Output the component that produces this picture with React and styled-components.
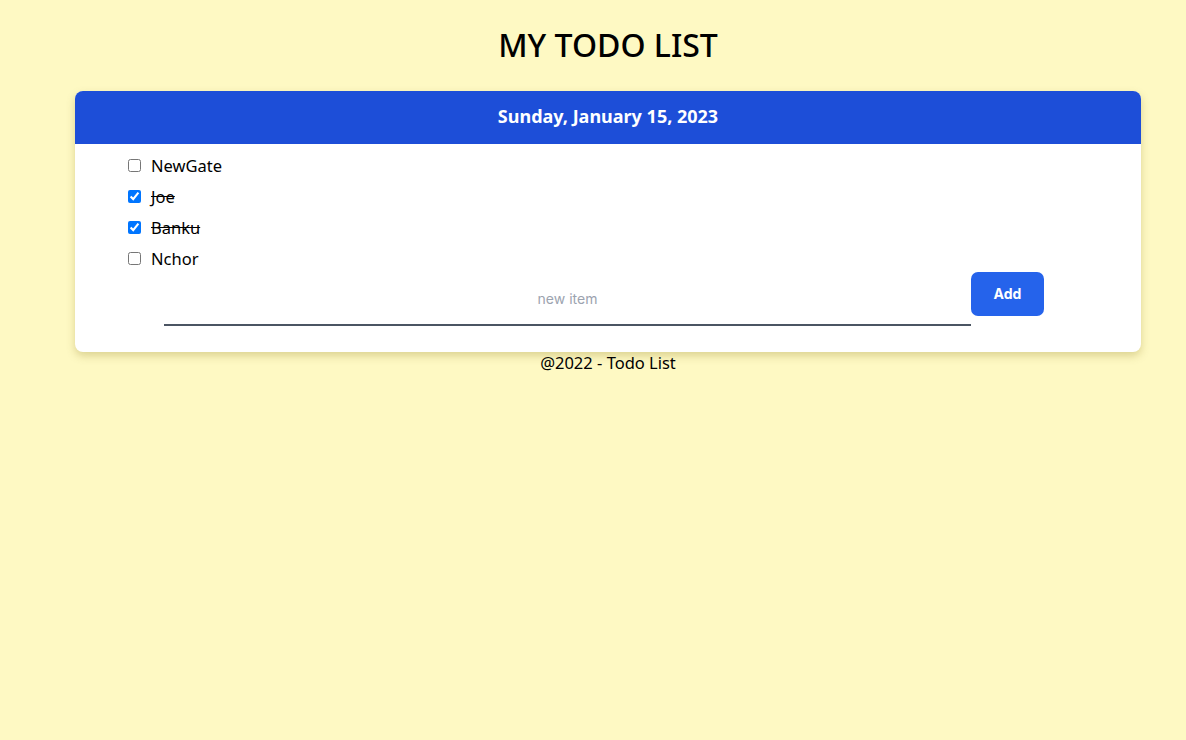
import styled, { createGlobalStyle } from 'styled-components'

const GlobalStyle = createGlobalStyle`
  body {
    margin: 0;
    background: #fef9c3;
    font-family: "Noto Sans", "Open Sans", sans-serif;
    color: #000;
  }
`

const Page = styled.div`
  display: flex;
  flex-direction: column;
  align-items: center;
  padding: 23px 45px 0 75px;
`

const Title = styled.h1`
  margin: 0 0 24px;
  font-size: 32px;
  font-weight: 500;
  line-height: 44px;
`

const Card = styled.section`
  width: 100%;
  background: #fff;
  border-radius: 8px;
  box-shadow: 0 4px 8px rgba(120, 100, 0, 0.25);
  padding-bottom: 26px;
`

const CardHeader = styled.header`
  display: flex;
  align-items: center;
  justify-content: center;
  height: 53px;
  padding-bottom: 3px;
  box-sizing: border-box;
  background: #1d4ed8;
  border-radius: 8px 8px 0 0;
  color: #fff;
  font-size: 18px;
  font-weight: 700;
`

const List = styled.ul`
  list-style: none;
  margin: 0;
  padding: 6px 0 0 52px;
`

const Item = styled.li`
  display: flex;
  align-items: center;
  height: 31px;
  font-size: 16.5px;

  & input {
    width: 13px;
    height: 13px;
    margin: 0 10px 0 1px;
  }

  & span {
    text-decoration: ${p => (p.$done ? 'line-through' : 'none')};
  }
`

const Form = styled.form`
  display: flex;
  align-items: flex-start;
  margin: -2px auto 0;
  width: 880px;
  position: relative;
  left: -4px;
`

const Input = styled.input`
  flex: 1;
  height: 51px;
  border: none;
  border-bottom: 2px solid #4b5563;
  outline: none;
  text-align: center;
  font-family: Inter, "Liberation Sans", sans-serif;
  font-size: 14px;
  padding: 0;
  margin-top: 1px;

  &::placeholder {
    color: #9ca3af;
  }
`

const Button = styled.button`
  width: 73px;
  height: 44px;
  padding: 0 0 2px;
  border: none;
  border-radius: 7px;
  background: #2563eb;
  color: #fff;
  font-family: Inter, "Liberation Sans", sans-serif;
  font-weight: 700;
  font-size: 14px;
`

const Footer = styled.footer`
  margin-top: 0;
  font-size: 16.5px;
  line-height: 22px;
`

const todos = [
  { name: 'NewGate', done: false },
  { name: 'Joe', done: true },
  { name: 'Banku', done: true },
  { name: 'Nchor', done: false },
]

export default function App() {
  return (
    <>
      <GlobalStyle />
      <Page>
        <Title>MY TODO LIST</Title>
        <Card>
          <CardHeader>Sunday, January 15, 2023</CardHeader>
          <List>
            {todos.map(t => (
              <Item key={t.name} $done={t.done}>
                <input type="checkbox" defaultChecked={t.done} />
                <span>{t.name}</span>
              </Item>
            ))}
          </List>
          <Form onSubmit={e => e.preventDefault()}>
            <Input placeholder="new item" />
            <Button type="submit">Add</Button>
          </Form>
        </Card>
        <Footer>@2022 - Todo List</Footer>
      </Page>
    </>
  )
}
